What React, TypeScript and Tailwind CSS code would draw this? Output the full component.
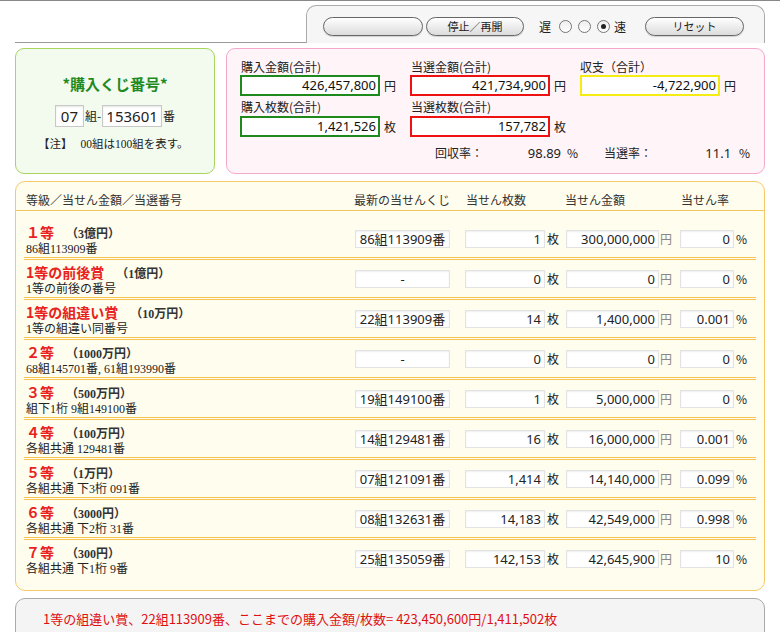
import React from 'react';

type PrizeRow = {
  title: string;
  prize: string;
  sub: string;
  latest: string;
  count: string;
  amount: string;
  rate: string;
};

const rows: PrizeRow[] = [
  { title: '１等', prize: '（3億円）', sub: '86組113909番', latest: '86組113909番', count: '1', amount: '300,000,000', rate: '0' },
  { title: '1等の前後賞', prize: '（1億円）', sub: '1等の前後の番号', latest: '-', count: '0', amount: '0', rate: '0' },
  { title: '1等の組違い賞', prize: '（10万円）', sub: '1等の組違い同番号', latest: '22組113909番', count: '14', amount: '1,400,000', rate: '0.001' },
  { title: '２等', prize: '（1000万円）', sub: '68組145701番, 61組193990番', latest: '-', count: '0', amount: '0', rate: '0' },
  { title: '３等', prize: '（500万円）', sub: '組下1桁 9組149100番', latest: '19組149100番', count: '1', amount: '5,000,000', rate: '0' },
  { title: '４等', prize: '（100万円）', sub: '各組共通 129481番', latest: '14組129481番', count: '16', amount: '16,000,000', rate: '0.001' },
  { title: '５等', prize: '（1万円）', sub: '各組共通 下3桁 091番', latest: '07組121091番', count: '1,414', amount: '14,140,000', rate: '0.099' },
  { title: '６等', prize: '（3000円）', sub: '各組共通 下2桁 31番', latest: '08組132631番', count: '14,183', amount: '42,549,000', rate: '0.998' },
  { title: '７等', prize: '（300円）', sub: '各組共通 下1桁 9番', latest: '25組135059番', count: '142,153', amount: '42,645,900', rate: '10' },
];

const sans = "font-['Noto_Sans','Noto_Sans_CJK_JP',sans-serif]";
const serif = "font-['Liberation_Serif','Noto_Sans_CJK_JP',serif]";
const cell = 'h-[18px] border border-[#e3e3e3] bg-white shadow-[inset_0_1px_2px_rgba(0,0,0,0.07)] text-[13px] leading-[16px] text-[#222]';

function PillButton({ label, className }: { label: string; className: string }) {
  return (
    <div
      className={`h-[19px] rounded-full border border-[#666] bg-gradient-to-b from-white to-[#dcdcdc] shadow-[0_1px_1px_rgba(0,0,0,0.15)] text-[11px] leading-[17px] text-center text-[#222] ${className}`}
    >
      {label}
    </div>
  );
}

function Radio({ checked }: { checked?: boolean }) {
  return (
    <div className="w-[13px] h-[13px] rounded-full border border-[#777] bg-gradient-to-b from-[#eee] to-white flex items-center justify-center">
      {checked && <div className="w-[5px] h-[5px] rounded-full bg-[#222]" />}
    </div>
  );
}

function TotalBox({ value, color }: { value: string; color: string }) {
  return (
    <div className={`w-[140px] h-[21px] border-2 ${color} bg-white text-right pr-[2px] text-[13px] leading-[17px] text-[#111] ${sans}`}>
      {value}
    </div>
  );
}

export default function App() {
  return (
    <div className="w-[780px] h-[632px] overflow-hidden bg-white border-t border-[#888] font-['Noto_Sans_CJK_JP',sans-serif] text-[#222]">
      {/* control bar */}
      <div className="mx-[15px] h-[42px] border-b border-[#999] flex justify-end">
        <div className="relative mt-[4px] -mb-px w-[459px] border border-b-0 border-[#aaa] rounded-t-[10px] bg-[#f6f6f6] flex items-start pt-[11px] pl-[16px]">
          <PillButton label="" className="w-[100px]" />
          <PillButton label="停止／再開" className="w-[98px] ml-[3px]" />
          <span className="ml-[15px] text-[12px] leading-[19px]">遅</span>
          <div className="ml-[8px] mt-[3px] flex gap-[6px]">
            <Radio />
            <Radio />
            <Radio checked />
          </div>
          <span className="ml-[4px] text-[12px] leading-[19px]">速</span>
          <PillButton label="リセット" className="w-[99px] ml-[19px]" />
        </div>
      </div>

      <div className="mx-[15px] mt-[5px] flex gap-[11px]">
        {/* ticket number */}
        <div className="w-[200px] h-[126px] border border-[#a9d45e] rounded-[9px] bg-[#f3fbef] flex flex-col items-center pt-[26px]">
          <div className="text-[15px] leading-[18px] font-bold text-[#1f8a1f]">*購入くじ番号*</div>
          <div className="mt-[12px] flex items-center">
            <div className={`w-[29px] h-[22px] border border-[#c8c8c8] bg-white shadow-[inset_0_1px_2px_rgba(0,0,0,0.1)] text-center text-[15px] leading-[20px] ${sans}`}>07</div>
            <span className="ml-[1px] text-[12px]">組-</span>
            <div className={`ml-[1px] w-[60px] h-[22px] border border-[#c8c8c8] bg-white shadow-[inset_0_1px_2px_rgba(0,0,0,0.1)] text-center text-[15px] leading-[20px] ${sans}`}>153601</div>
            <span className="ml-[1px] text-[12px]">番</span>
          </div>
          <div className={`mt-[9px] self-start pl-[22px] flex text-[11.5px] leading-[16px] ${serif}`}>
            <span>【注】</span>
            <span className="ml-[8px]">00組は100組を表す。</span>
          </div>
        </div>

        {/* totals */}
        <div className="w-[539px] h-[126px] border border-[#f4a9cb] rounded-[9px] bg-[#fff5f8] pl-[13px] pt-[10px] text-[12px]">
          <div className="grid grid-cols-[170px_170px_170px]">
            <div>
              <div className="h-[16px] leading-[16px] pl-[1px]">購入金額(合計)</div>
              <div className="flex items-center">
                <TotalBox value="426,457,800" color="border-[#1e8a1e]" />
                <span className="ml-[4px]">円</span>
              </div>
              <div className="mt-[3px] h-[16px] leading-[16px] pl-[1px]">購入枚数(合計)</div>
              <div className="mt-[1px] flex items-center">
                <TotalBox value="1,421,526" color="border-[#1e8a1e]" />
                <span className="ml-[4px]">枚</span>
              </div>
            </div>
            <div>
              <div className="h-[16px] leading-[16px] pl-[1px]">当選金額(合計)</div>
              <div className="flex items-center">
                <TotalBox value="421,734,900" color="border-[#ee1111]" />
                <span className="ml-[4px]">円</span>
              </div>
              <div className="mt-[3px] h-[16px] leading-[16px] pl-[1px]">当選枚数(合計)</div>
              <div className="mt-[1px] flex items-center">
                <TotalBox value="157,782" color="border-[#ee1111]" />
                <span className="ml-[4px]">枚</span>
              </div>
            </div>
            <div>
              <div className="h-[16px] leading-[16px]">収支（合計）</div>
              <div className="flex items-center">
                <TotalBox value="-4,722,900" color="border-[#f5ec14]" />
                <span className="ml-[4px]">円</span>
              </div>
            </div>
          </div>
          <div className="mt-[8px] flex h-[16px] leading-[16px]">
            <span className="ml-[195px]">回収率：</span>
            <span className={`w-[78px] text-right text-[13px] ${sans}`}>98.89</span>
            <span className="ml-[6px]">%</span>
            <span className="ml-[26px]">当選率：</span>
            <span className={`w-[79px] text-right text-[13px] ${sans}`}>11.1</span>
            <span className="ml-[8px]">%</span>
          </div>
        </div>
      </div>

      {/* prize table */}
      <div className="mx-[15px] mt-[7px] border border-[#f5c96a] rounded-[10px] bg-[#fffdee]">
        <div className="h-[29px] border-b border-[#f5c45a] flex pt-[10px] pl-[10px] text-[12px] leading-[16px] text-[#333]">
          <span className="w-[328px]">等級／当せん金額／当選番号</span>
          <span className="w-[112px]">最新の当せんくじ</span>
          <span className="w-[99px]">当せん枚数</span>
          <span className="w-[116px]">当せん金額</span>
          <span>当せん率</span>
        </div>
        <div className="pt-[9px] pb-[10px]">
          {rows.map((row, i) => (
            <div
              key={row.title}
              className={`mx-[8px] pl-[2px] h-[40px] flex items-start ${i < rows.length - 1 ? 'border-b-[3px] border-double border-[#f7c352]' : ''}`}
            >
              <div className="w-[329px] pt-[3px]">
                <div className="h-[18px] flex items-baseline">
                  <span className="text-[14px] leading-[18px] font-bold text-[#e8231e]">{row.title}</span>
                  <span className={`ml-[12px] text-[12px] font-bold text-[#333] ${serif}`}>{row.prize}</span>
                </div>
                <div className={`h-[16px] text-[12px] leading-[16px] text-[#222] ${serif}`}>{row.sub}</div>
              </div>
              <div className="h-[37px] flex items-center">
                <div className={`w-[95px] text-center ${cell} ${sans}`}>{row.latest}</div>
                <div className={`ml-[15px] w-[80px] text-right pr-[3px] ${cell} ${sans}`}>{row.count}</div>
                <span className="w-[21px] pl-[2px] text-[12px]">枚</span>
                <div className={`w-[93px] text-right pr-[3px] ${cell} ${sans}`}>{row.amount}</div>
                <span className="w-[21px] pl-[1px] text-[12px] text-[#888]">円</span>
                <div className={`w-[54px] text-right pr-[3px] ${cell} ${sans}`}>{row.rate}</div>
                <span className="pl-[2px] text-[12px]">%</span>
              </div>
            </div>
          ))}
        </div>
      </div>

      {/* status line */}
      <div className="mx-[15px] mt-[7px] h-[60px] border border-[#aaa] rounded-[10px] bg-[#f4f4f4] pt-[12px] pl-[27px] text-[13px] leading-[16px] text-[#e01010]">
        1等の組違い賞、22組113909番、ここまでの購入金額/枚数= 423,450,600円/1,411,502枚
      </div>
    </div>
  );
}
